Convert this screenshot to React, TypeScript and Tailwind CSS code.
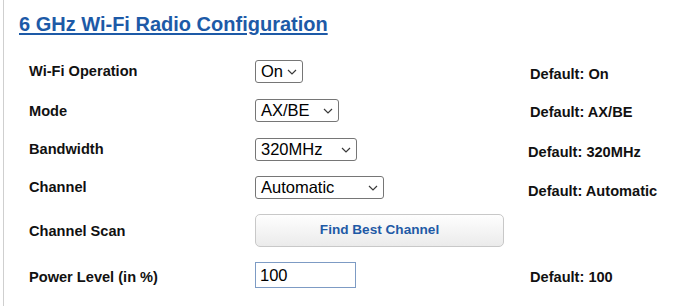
import React from "react";

const Chevron = () => (
  <svg width="10" height="6" viewBox="0 0 10 6" className="shrink-0">
    <polyline points="1,1 5,5 9,1" fill="none" stroke="#3a3a3a" strokeWidth="1.2" />
  </svg>
);

const Select = ({ value, w }: { value: string; w: string }) => (
  <div
    className={`${w} h-[23px] flex items-center justify-between pl-[5px] pr-[5px] border border-[#767676] rounded-[3px] bg-white text-[16.5px] text-black leading-none`}
  >
    <span>{value}</span>
    <Chevron />
  </div>
);

const Row = ({
  h,
  label,
  labelClass,
  children,
  def,
  defClass,
}: {
  h: string;
  label: string;
  labelClass?: string;
  children: React.ReactNode;
  def?: string;
  defClass?: string;
}) => (
  <div className={`flex items-center ${h}`}>
    <div className={`w-[255px] shrink-0 pl-[29px] font-bold text-[14.6px] text-[#111] ${labelClass ?? ""}`}>{label}</div>
    <div className="w-[273px] shrink-0">{children}</div>
    {def && <div className={`font-bold text-[14.6px] text-[#111] whitespace-nowrap ${defClass ?? ""}`}>{def}</div>}
  </div>
);

export default function App() {
  return (
    <div className="w-[689px] h-[306px] bg-white overflow-hidden" style={{ fontFamily: '"Liberation Sans", Arial, sans-serif' }}>
      <div className="ml-[3px] h-full border-l border-[#cfcfcf]">
        <div className="pt-[13px] pl-[15px] h-[52px]">
          <span className="text-[20px] leading-[23px] font-bold text-[#1d5aa7] underline underline-offset-[2px] decoration-[1.5px]">
            6 GHz Wi-Fi Radio Configuration
          </span>
        </div>
        <div className="-ml-[4px]">
          <Row h="h-[39px]" label="Wi-Fi Operation" labelClass="mt-[1px]" def="Default: On" defClass="mt-[6px] ml-[2px]">
            <Select value="On" w="w-[48px]" />
          </Row>
          <Row h="h-[39px]" label="Mode" labelClass="mt-[2px]" def="Default: AX/BE" defClass="mt-[4px] ml-[2px]">
            <Select value="AX/BE" w="w-[84px]" />
          </Row>
          <Row h="h-[39px]" label="Bandwidth" labelClass="mt-[1px]" def="Default: 320MHz" defClass="mt-[7px]">
            <Select value="320MHz" w="w-[102px]" />
          </Row>
          <Row h="h-[37px]" label="Channel" def="Default: Automatic" defClass="mt-[8px]">
            <Select value="Automatic" w="w-[129px]" />
          </Row>
          <Row h="h-[49px]" label="Channel Scan" labelClass="mt-[2px]">
            <div className="w-[249px] h-[33px] flex items-center justify-center rounded-[5px] border border-[#c8c8c8] bg-gradient-to-b from-[#fefefe] to-[#ebebeb] font-bold text-[13.6px] text-[#1f5aa6]">
              Find Best Channel
            </div>
          </Row>
          <Row h="h-[40px]" label="Power Level (in %)" labelClass="mt-[5px]" def="Default: 100" defClass="mt-[5px] ml-[2px]">
            <div className="w-[101px] h-[26px] flex items-center pl-[4px] border border-[#7d9bc4] bg-white text-[16.5px] text-black leading-none">
              100
            </div>
          </Row>
        </div>
      </div>
    </div>
  );
}
